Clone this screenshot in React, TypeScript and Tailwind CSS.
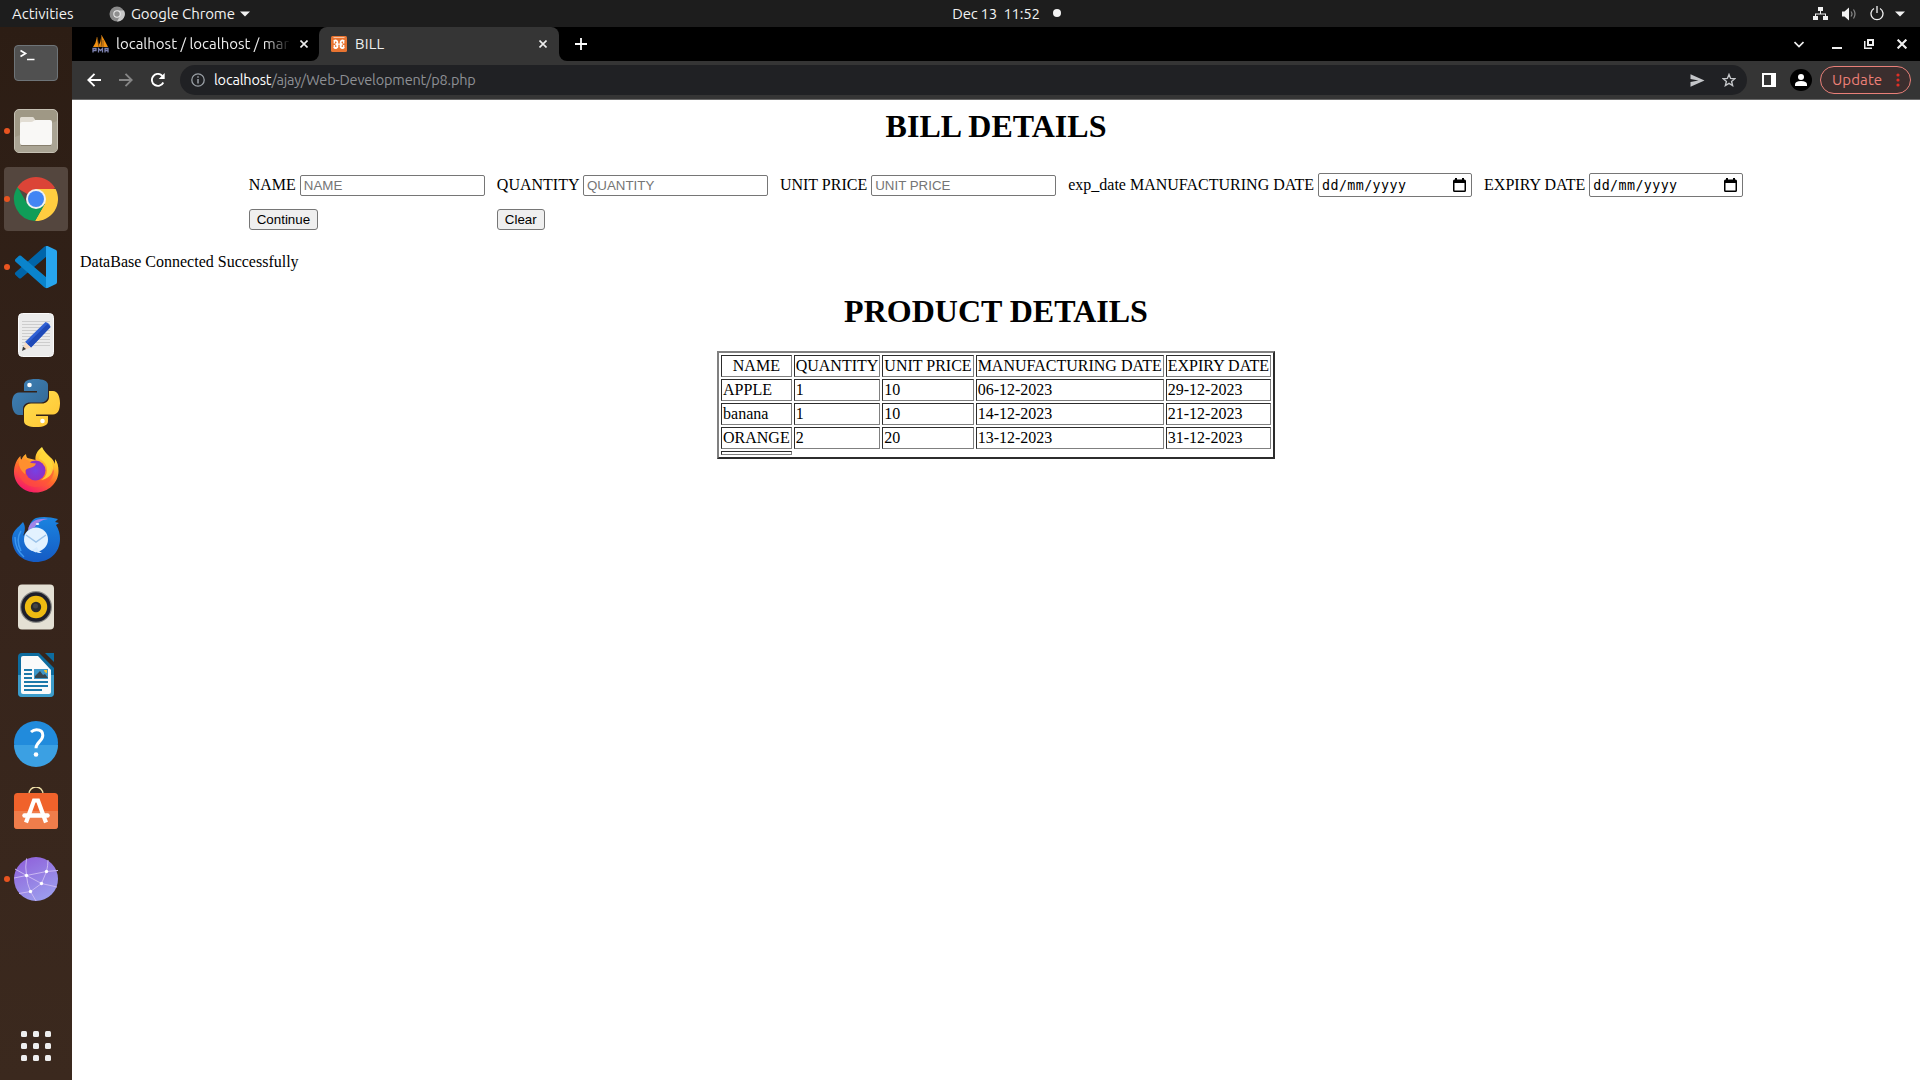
import type { ReactNode } from "react";

const UI = "font-['Ubuntu','Noto_Sans',sans-serif]";

function TerminalIcon() {
  return (
    <svg width="48" height="48" viewBox="0 0 48 48">
      <rect x="2.5" y="6.5" width="43" height="35" rx="3.5" fill="#505050" stroke="#6e7478" />
      <path d="M8.500 11.500l5 3-5 3" fill="none" stroke="#fff" strokeWidth="1.700" />
      <path d="M15 20.500h7.500" stroke="#fff" strokeWidth="1.500" />
    </svg>
  );
}

function FilesIcon() {
  return (
    <svg width="48" height="48" viewBox="0 0 48 48">
      <rect x="2.500" y="2.500" width="43" height="43" rx="4.500" fill="#9f9885" stroke="#c5c0b3" />
      <path d="M3 30L45 14v27a4 4 0 0 1-4 4H7a4 4 0 0 1-4-4z" fill="#aaa494" />
      <path d="M8 15v-3.500q0-1.500 1.500-1.500h11q1 0 1.500 1l1.500 2.500H38V20H8z" fill="#e2ddd3" />
      <path d="M8 17q0-2 2-2h9q1.500 0 2.500-1t2.500-1h14q2 0 2 2v21q0 2-2 2H10q-2 0-2-2z" fill="#f9f8f6" />
      <path d="M9 38.500h30" stroke="#877f6e" strokeWidth="1" />
    </svg>
  );
}

function ChromeIcon() {
  return (
    <svg width="48" height="48" viewBox="0 0 48 48">
      <path d="M24 24L4.950 13A22 22 0 0 1 43.050 13z" fill="#db4437" />
      <path d="M24 14H43.600A22 22 0 0 1 23 46L32.700 29z" fill="#ffcd40" />
      <path d="M15.340 29L5.600 12A22 22 0 0 0 23 46L32.700 29z" fill="#0f9d58" />
      <circle cx="24" cy="24" r="10" fill="#f1f1f1" />
      <circle cx="24" cy="24" r="8" fill="#4285f4" />
    </svg>
  );
}

function CodeIcon() {
  return (
    <svg width="48" height="48" viewBox="0 0 48 48">
      <path d="M3 31.500l4 3.700q1 .6 2 0L35 13V3q-1.500-.5-3 1L3.300 29.500q-.8 1 0 2z" fill="#0065a9" />
      <path d="M3 16.500l4-3.700q1-.6 2 0L35 35v10q-1.500.5-3-1L3.300 18.500q-.8-1 0-2z" fill="#0a84cc" />
      <path d="M34 3.300q.7-.6 1.600-.3l8.400 4q1 .6 1 2v30q0 1.400-1 2l-8.400 4q-1 .3-1.600-.3z" fill="#27a5ee" />
    </svg>
  );
}

function EditorIcon() {
  return (
    <svg width="48" height="48" viewBox="0 0 48 48">
      <rect x="6.500" y="2.500" width="35" height="43" rx="4" fill="#ebebeb" stroke="#fafafa" />
      <path d="M10 10.500h28M10 13.500h28M10 16.500h28M10 19.500h28M10 22.500h28M10 25.500h28M10 28.500h28M10 31.500h28M10 34.500h28" stroke="#c9c9c9" strokeWidth=".9" />
      <path d="M13 31L33.500 11q4 1 5 5L19 36.500z" fill="#2f60d4" />
      <path d="M15 33L35.500 13l3 3L19 36.500z" fill="#1f4ab8" />
      <path d="M13 31l6 5.500-7.500 2.500z" fill="#f7d9bf" />
      <path d="M11 35.500l3 2.500-4 2z" fill="#3a3a3a" />
    </svg>
  );
}

function PythonIcon() {
  return (
    <svg width="48" height="48" viewBox="0 0 48 48">
      <defs>
        <linearGradient id="pyBlue" x1="0" y1="0" x2="1" y2="1">
          <stop offset="0" stopColor="#3f83ba" />
          <stop offset="1" stopColor="#33658f" />
        </linearGradient>
        <linearGradient id="pyGold" x1="0" y1="0" x2="1" y2="1">
          <stop offset="0" stopColor="#ffe052" />
          <stop offset="1" stopColor="#ffc331" />
        </linearGradient>
      </defs>
      <path d="M24 0c-8 0-12 2-12 6v6h13v1.500H7c-5 0-7 5-7 11S2.500 36 7 36h4v-6c0-4 3-6.500 7-6.500h11c4 0 7-3 7-6.500V6c0-4-5-6-12-6z" fill="url(#pyBlue)" />
      <path d="M24 48c8 0 12-2 12-6v-5H24v-1.500h17c5 0 7-5 7-11.500S45.500 12 41 12h-4v6c0 4-3 6.500-7 6.500H19c-4 0-7 3-7 6.500v11c0 4 5 6 12 6z" fill="url(#pyGold)" />
      <circle cx="17.500" cy="6" r="2.300" fill="#fff" />
      <circle cx="30.500" cy="42" r="2.300" fill="#fff" />
    </svg>
  );
}

function FirefoxIcon() {
  return (
    <svg width="48" height="48" viewBox="0 1 48 48">
      <defs>
        <linearGradient id="fxBody" x1=".8" y1="0" x2=".3" y2="1">
          <stop offset="0" stopColor="#fff44f" />
          <stop offset=".3" stopColor="#ffc02d" />
          <stop offset=".6" stopColor="#ff6a2b" />
          <stop offset="1" stopColor="#f5156c" />
        </linearGradient>
        <radialGradient id="fxGlobe">
          <stop offset="0" stopColor="#7542e5" />
          <stop offset="1" stopColor="#8f2fc4" />
        </radialGradient>
      </defs>
      <path d="M30 1c-5 4-7 8-6.500 13l-8-2c-1-1-1.500-2.500-1.500-4-3 2-4 4-4.500 6-1-1-1-3-1-4C5 13 2 19 2 26c0 12 10 20.500 22 20.500S46.500 37 46.500 25c0-5-1-9-3.500-12v5c-2-5-4-6-6-8-3-3-5-5-7-9z" fill="url(#fxBody)" />
      <circle cx="23.500" cy="24.500" r="10" fill="url(#fxGlobe)" />
      <path d="M6 20c-1 12 7 21 18 21 9 0 17-6 18-16-1-2-2-3-3-4 1 10-6 15-14 15-8-1-12-6-12-12l2-5z" fill="#ff4f3d" opacity=".6" />
      <path d="M7 14c5-2 9 0 12 3l5 .5c-1 3-4 4-8 5-3 1-3 3-2.500 6C9 25 6 20 7 14z" fill="#ff8f2e" />
      <path d="M27 13c4 1 8 5 8 11 0 5-3 8-6 10 7-1 12-6 12-12 0-7-5-12-9-17-3 2-5 5-5 8z" fill="#ffd93b" opacity=".85" />
    </svg>
  );
}

function ThunderbirdIcon() {
  return (
    <svg width="48" height="48" viewBox="0 -1 48 48">
      <defs>
        <linearGradient id="tbBody" x1="0" y1="0" x2="0" y2="1">
          <stop offset="0" stopColor="#1b84e0" />
          <stop offset="1" stopColor="#155bc4" />
        </linearGradient>
      </defs>
      <path d="M24 2c7-2 14-1 22 1l-3 3 4 1-3 2c3 5 4 9 4 14 0 14-11 23-24 23C11 46 0 37 0 22c1-8 6-10 11-16 3 5 2 9 0 14l6-7c0-5 3-9 7-11z" fill="url(#tbBody)" />
      <path d="M16 14c1-7 7-12 20-11-7 1-11 4-13 8z" fill="#a184e8" />
      <path d="M9 15c-4 6-3 14 0 20M3 21c0 8 3 15 9 20" fill="none" stroke="#3b97ee" strokeWidth="1.500" />
      <circle cx="24" cy="23.500" r="12" fill="#e3f2ff" />
      <path d="M14 19l10 7 10-7" fill="none" stroke="#9cc3e9" strokeWidth="1.500" />
      <path d="M20 34c3 3 6 3 10 3-4-2-4-4-5-6z" fill="#d6ebff" />
      <ellipse cx="25.500" cy="8" rx="1.800" ry="1.100" fill="#e8f5ff" />
    </svg>
  );
}

function SpeakerIcon() {
  return (
    <svg width="48" height="48" viewBox="0 .5 48 48">
      <rect x="6" y="2" width="36" height="45" rx="4" fill="#e4e0d4" />
      <circle cx="24" cy="24.500" r="16" fill="#8b8b88" />
      <circle cx="24" cy="24.500" r="14.800" fill="#1e1f2b" />
      <circle cx="24" cy="24.500" r="11.200" fill="#eebb12" />
      <circle cx="24" cy="24.500" r="5.200" fill="#2b2b2b" />
      <circle cx="23.500" cy="23.500" r="2.500" fill="#444" />
    </svg>
  );
}

function WriterIcon() {
  return (
    <svg width="48" height="48" viewBox="0 0 48 48">
      <path d="M10 2h17l15 15v25q0 4-4 4H10q-4 0-4-4V6q0-4 4-4z" fill="#0d6c9f" />
      <path d="M6 24h36v18q0 4-4 4H10q-4 0-4-4z" fill="#3c9cca" />
      <path d="M33 2h9v9z" fill="#0d6c9f" />
      <path d="M11 5h15l13 14v22q0 2-2 2H11q-2 0-2-2V7q0-2 2-2z" fill="#fafafa" />
      <path d="M12 19h8M12 23h8M12 27h8M12 31h24M12 35h24M12 39h18" stroke="#1c78a9" strokeWidth="1.900" />
      <rect x="22" y="18" width="14" height="10" fill="#3d97c9" />
      <path d="M23 27v-2l5-5 3 4 2-1 3 4z" fill="#36474f" />
      <path d="M32 19h3v3q-2.500 0-3-3z" fill="#f5c431" />
    </svg>
  );
}

function HelpIcon() {
  return (
    <svg width="48" height="48" viewBox="0 0 48 48">
      <circle cx="24" cy="24" r="22" fill="#218bdc" />
      <path d="M2 26h44a22 22 0 0 1-44 0z" fill="#3ba0e3" />
      <path d="M19 13c2-1.800 3.500-2.300 5.500-2.300 4 0 6.300 2.200 6.300 5.500 0 6-6.800 6.800-6.800 13" fill="none" stroke="#fff" strokeWidth="3" />
      <circle cx="24" cy="35.500" r="2.300" fill="#fff" />
    </svg>
  );
}

function StoreIcon() {
  return (
    <svg width="48" height="48" viewBox="0 2 48 48">
      <path d="M17 11V9a7 7 0 0 1 14 0V11" fill="none" stroke="#efe0a8" strokeWidth="1.500" />
      <rect x="2" y="8" width="44" height="36" rx="3.500" fill="#f0622b" />
      <path d="M2 26h44v14.500q0 3.500-3.500 3.500h-37Q2 44 2 40.500z" fill="#ef7d4b" />
      <path d="M14 37.500l8-22h4l8 22" fill="none" stroke="#fff" strokeWidth="4.200" />
      <path d="M12.500 30.500h23" stroke="#fff" strokeWidth="4.500" strokeLinecap="round" />
    </svg>
  );
}

function WebIcon() {
  return (
    <svg width="48" height="48" viewBox="0 0 48 48">
      <defs>
        <linearGradient id="web" x1="0" y1="0" x2=".5" y2="1">
          <stop offset="0" stopColor="#8e5cd9" />
          <stop offset="1" stopColor="#9b9aec" />
        </linearGradient>
      </defs>
      <circle cx="24" cy="24" r="22" fill="url(#web)" />
      <path d="M14.500 3.500Q13 12 14.500 20.500Q15 29 18.500 36.500L24 46M3 14l11.500 6.500L29.500 28.500 45 32M14.500 20.500L34.500 16.500 46 15.500M36 5Q36 11 34.500 16.500L29.500 28.500 18.500 36.500 7 38.500M2 23l12.500-2.500" fill="none" stroke="#c9b7f2" strokeWidth="1" />
      <g fill="#fff">
        <circle cx="14.500" cy="20.500" r="1.700" />
        <circle cx="34.500" cy="16.500" r="1.700" />
        <circle cx="29.500" cy="28.500" r="1.700" />
        <circle cx="18.500" cy="36.500" r="1.700" />
      </g>
    </svg>
  );
}

function DockItem({ icon, running, active }: { icon: ReactNode; running?: boolean; active?: boolean }) {
  return (
    <div className={`relative flex h-16 w-16 items-center justify-center rounded ${active ? "bg-[#54463e]" : ""}`}>
      {running && <span className="absolute left-0 top-[29px] size-1.5 rounded-full bg-[#e95420]" />}
      {icon}
    </div>
  );
}

function Dock() {
  return (
    <nav className="flex w-[72px] shrink-0 flex-col items-center justify-between bg-linear-to-b from-[#2c1d14] via-[#36241b] to-[#3b291e] pt-1 pb-[19px]">
      <div className="flex flex-col gap-1">
        <DockItem icon={<TerminalIcon />} />
        <DockItem icon={<FilesIcon />} running />
        <DockItem icon={<ChromeIcon />} running active />
        <DockItem icon={<CodeIcon />} running />
        <DockItem icon={<EditorIcon />} />
        <DockItem icon={<PythonIcon />} />
        <DockItem icon={<FirefoxIcon />} />
        <DockItem icon={<ThunderbirdIcon />} />
        <DockItem icon={<SpeakerIcon />} />
        <DockItem icon={<WriterIcon />} />
        <DockItem icon={<HelpIcon />} />
        <DockItem icon={<StoreIcon />} />
        <DockItem icon={<WebIcon />} running />
      </div>
      <div className="grid grid-cols-3 gap-1.5">
        {Array.from({ length: 9 }, (_, i) => (
          <span key={i} className="size-1.5 rounded-[1.5px] bg-[#eee]" />
        ))}
      </div>
    </nav>
  );
}

function TopBar() {
  return (
    <header className={`grid h-[27px] shrink-0 grid-cols-3 items-center bg-[#1d1d1d] text-[15px] leading-none text-[#f2f2f2] ${UI}`}>
      <div className="flex items-center pl-3">
        <span className="w-[97px]">Activities</span>
        <svg width="16" height="16" viewBox="0 0 16 16">
          <circle cx="8" cy="8" r="7.500" fill="#8b8b8b" />
          <path d="M8 4.500h7A7.500 7.500 0 0 1 8 15.500l3-5.500z" fill="#c9c9c9" />
          <circle cx="8" cy="8" r="3.700" fill="#eee" />
          <circle cx="8" cy="8" r="2.700" fill="#8f8f8f" />
        </svg>
        <span className="ml-1.5 w-[104px] whitespace-nowrap tracking-[-0.1px]">Google Chrome</span>
        <svg className="ml-[5px]" width="10" height="6" viewBox="0 0 10 6">
          <path d="M0 .5h10L5 5.500z" fill="#f2f2f2" />
        </svg>
      </div>
      <div className="flex items-center justify-center gap-[13px] pb-px pl-[93px]">
        <span className="whitespace-pre tracking-[-0.25px]">Dec 13  11:52</span>
        <span className="size-2 rounded-full bg-[#f2f2f2]" />
      </div>
      <div className="flex items-center justify-end pr-[15px]">
        <svg width="15" height="14" viewBox="0 0 15 14" fill="#f2f2f2">
          <path d="M5 0h5v4H5zM0 9h5v4H0zM10 9h5v4h-5zM7 4h1v3H7zM2 6.500h11V9h-1V7.500H3V9H2z" />
        </svg>
        <svg className="ml-[13px]" width="16" height="14" viewBox="0 0 16 14">
          <path d="M1 4.500h2.500L8 .5v13l-4.500-4H1z" fill="#f2f2f2" />
          <path d="M10 4.500q2 2.500 0 5M12.500 2.500q3 4.500 0 9" fill="none" stroke="#888" strokeWidth="1.200" />
        </svg>
        <svg className="ml-[13px]" width="14" height="15" viewBox="0 0 14 15" fill="none" stroke="#f2f2f2" strokeWidth="1.300">
          <path d="M4 2.500a6 6 0 1 0 6 0M7 0v7" />
        </svg>
        <svg className="ml-[11px]" width="10" height="6" viewBox="0 0 10 6">
          <path d="M0 .5h10L5 5.500z" fill="#f2f2f2" />
        </svg>
      </div>
    </header>
  );
}

function Cross({ size = 8, weight = 1.6 }: { size?: number; weight?: number }) {
  return (
    <svg width={size} height={size} viewBox="0 0 8 8" fill="none" stroke="#eee" strokeWidth={weight}>
      <path d="M.5.5l7 7M7.500.5l-7 7" />
    </svg>
  );
}

function TabStrip() {
  return (
    <div className="bg-[#353535]">
      <div className={`flex h-[34px] text-[15px] leading-none text-[#eee] ${UI}`}>
        <div className="flex w-[247px] items-center rounded-br-lg bg-black pl-5">
          <svg width="17" height="18" viewBox="0 0 17 18">
            <path d="M1 12Q4 8 5 2l2 10zM6 12Q9 7 9.500 0q3 5 6.500 12z" fill="#f29111" />
            <path d="M5 2l2 10M9.500 0q.5 7-.5 12M11 5v7" stroke="#7a4a12" strokeWidth=".8" />
            <path d="M1 17.500v-4h3v2H1M6.500 17.500v-4l2 2 2-2v4M13 17.500v-4h3v4M13 15.500h3" fill="none" stroke="#7d82b0" strokeWidth="1.300" />
          </svg>
          <span className="ml-[7px] w-[175px] overflow-hidden pt-1 pb-1.5 whitespace-nowrap mask-r-from-85% mask-r-to-100%">localhost / localhost / mar</span>
          <span className="ml-[9px]"><Cross /></span>
        </div>
        <div className="w-[240px] bg-black">
          <div className="flex h-full items-center rounded-t-lg bg-[#353535] pl-3">
            <svg width="16" height="16" viewBox="0 0 16 16">
              <rect width="16" height="16" rx="1.500" fill="#e87431" />
              <path d="M2.500 1.500h11" stroke="#f7c4a4" />
              <g fill="none" stroke="#fff" strokeWidth="1.900">
                <path d="M3 5.200Q4 4.200 5.300 4.600T6.300 7Q5.800 8.200 4.500 8.200Q6.300 8.300 6.500 9.800T5 12Q3.800 12.200 3 11.200" />
                <path d="M13 5.200Q12 4.200 10.700 4.600T9.700 7Q10.200 8.200 11.500 8.200Q9.700 8.300 9.500 9.800T11 12Q12.200 12.200 13 11.200" />
                <path d="M3.300 4.500v3M12.700 4.500v3M3.300 9v3M12.700 9v3M6 8.200h4" strokeWidth="1.300" />
              </g>
            </svg>
            <span className="ml-2 w-[184px] pb-0.5 tracking-[0.2px]">BILL</span>
            <Cross />
          </div>
        </div>
        <div className="flex flex-1 items-center rounded-bl-lg bg-black pl-4">
          <svg width="12" height="12" viewBox="0 0 12 12" stroke="#fff" strokeWidth="1.800">
            <path d="M6 0v12M0 6h12" />
          </svg>
          <div className="ml-auto flex items-center pr-[13px]">
            <svg width="10" height="7" viewBox="0 0 10 7" fill="none" stroke="#eee" strokeWidth="1.700">
              <path d="M.5 1l4.500 4.500L9.500 1" />
            </svg>
            <span className="mt-2 ml-[28px] h-0.5 w-2.5 bg-[#eee]" />
            <svg className="ml-[22px]" width="10" height="10" viewBox="0 0 10 10" fill="none" stroke="#eee">
              <path d="M4 1h5v5H4z" strokeWidth="2" />
              <path d="M.75 2v7.250H8" strokeWidth="1.500" />
            </svg>
            <span className="ml-[23px]"><Cross size={10} weight={1.700} /></span>
          </div>
        </div>
      </div>
    </div>
  );
}

function Toolbar() {
  return (
    <div className={`flex h-[39px] items-center border-b border-[#6a6a6a] bg-[#353535] pr-[9px] pl-[15px] leading-none ${UI}`}>
      <svg width="14" height="14" viewBox="0 0 14 14" fill="none" stroke="#fff" strokeWidth="1.900">
        <path d="M14 7H1.500M7.500.8L1.300 7l6.200 6.200" />
      </svg>
      <svg className="ml-[18px]" width="14" height="14" viewBox="0 0 14 14" fill="none" stroke="#868686" strokeWidth="1.900">
        <path d="M0 7h12.500M6.500.8L12.700 7l-6.200 6.200" />
      </svg>
      <svg className="ml-[18px]" width="14" height="14" viewBox="0 0 14 14">
        <path d="M12.300 9.500A6 6 0 1 1 11.300 2.800L12 3.500" fill="none" stroke="#fff" strokeWidth="1.900" />
        <path d="M13.700 0v6H7.700z" fill="#fff" />
      </svg>
      <div className="ml-[15px] flex h-[30px] flex-1 items-center rounded-full bg-[#202124] pr-[11px] pl-[11px]">
        <svg width="14" height="14" viewBox="0 0 14 14" fill="none" stroke="#9aa0a6" strokeWidth="1.300">
          <circle cx="7" cy="7" r="6.200" />
          <path d="M7 6v4.500M7 3.200v1.500" strokeWidth="1.500" />
        </svg>
        <span className="ml-[9px] text-[14.500px] tracking-[-0.18px] text-[#8e9094]">
          <span className="text-white">localhost</span>/ajay/Web-Development/p8.php
        </span>
        <svg className="ml-auto" width="15" height="13" viewBox="0 0 15 13">
          <path d="M.5.300L14.500 6.500.5 12.700V8l8-1.500-8-1.500z" fill="#c4c6c9" />
        </svg>
        <svg className="ml-[17px]" width="14" height="14" viewBox="0 0 14 14" fill="none" stroke="#c4c6c9" strokeWidth="1.400">
          <path d="M7 1.500l1.600 3.900 4.200.3-3.200 2.700 1 4.100L7 10.300l-3.600 2.200 1-4.100L1.200 5.700l4.200-.3z" />
        </svg>
      </div>
      <svg className="ml-[15px]" width="14" height="14" viewBox="0 0 14 14">
        <path d="M0 0h14v14H0zM2 2v10h7V2z" fill="#fff" fillRule="evenodd" />
      </svg>
      <svg className="ml-[14px]" width="22" height="22" viewBox="0 0 22 22">
        <circle cx="11" cy="11" r="11" fill="#000" />
        <circle cx="11" cy="8" r="3" fill="#fff" />
        <path d="M5 17v-1.500q0-3.500 6-3.500t6 3.500V17z" fill="#fff" />
      </svg>
      <div className="ml-2 flex h-7 w-[91px] items-center rounded-full border border-[#e98079] bg-[#3b2e2e] pl-[11px] text-[15px] text-[#ee8078]">
        <span className="w-[51px] pb-0.5 tracking-[0.1px]">Update</span>
        <svg className="ml-[13px]" width="4" height="14" viewBox="0 0 4 14" fill="#e02f26">
          <circle cx="2" cy="2" r="1.600" />
          <circle cx="2" cy="7" r="1.600" />
          <circle cx="2" cy="12" r="1.600" />
        </svg>
      </div>
    </div>
  );
}

function TextField({ label }: { label: string }) {
  return (
    <td className="p-[5px]">
      {label}{" "}
      <input
        placeholder={label}
        className="h-[21px] w-[185px] rounded-xs border border-[#767676] bg-white px-[3px] py-0 align-baseline font-['Liberation_Sans',sans-serif] text-[13.333px] leading-[15px] placeholder:text-[#757575]"
      />
    </td>
  );
}

function DateField({ label }: { label: string }) {
  return (
    <td className="p-[5px]">
      {label}{" "}
      <span className="inline-flex h-6 w-[154px] items-center justify-between rounded-xs border border-[#767676] pt-0.5 pr-[5.500px] pl-[3px] align-baseline font-['DejaVu_Sans_Mono',monospace] text-[13.333px] leading-[18px] tracking-[0.400px]">
        dd/mm/yyyy
        <svg className="mb-0.5" width="13" height="14" viewBox="0 0 13 14">
          <path d="M2 0h2v1.500h5V0h2v1.500h.5q1.500 0 1.500 1.500v9.500q0 1.500-1.500 1.500h-10Q0 14 0 12.500V3q0-1.500 1.500-1.500H2zM1.500 5v7.500h10V5z" fill="#000" fillRule="evenodd" />
        </svg>
      </span>
    </td>
  );
}

function FormButton({ children }: { children: ReactNode }) {
  return (
    <td className="p-[5px]">
      <button className="block h-[21px] rounded-[3px] border border-[#767676] bg-[#efefef] px-[7px] font-['Liberation_Sans',sans-serif] text-[13.333px] leading-[15px]">
        {children}
      </button>
    </td>
  );
}

const columns = ["NAME", "QUANTITY", "UNIT PRICE", "MANUFACTURING DATE", "EXPIRY DATE"];
const rows = [
  ["APPLE", "1", "10", "06-12-2023", "29-12-2023"],
  ["banana", "1", "10", "14-12-2023", "21-12-2023"],
  ["ORANGE", "2", "20", "13-12-2023", "31-12-2023"],
];
const cell = "border border-t-[#2c2c2c] border-r-[#808080] border-b-[#808080] border-l-[#2c2c2c] p-px";

function BillPage() {
  return (
    <main className="flex-1 bg-white p-2 font-['Liberation_Serif',serif] text-base leading-[18px] text-black">
      <h1 className="text-center text-[32px] leading-[37px] font-bold">BILL DETAILS</h1>
      <table className="mx-auto mt-[21px] border-separate border-spacing-0.5 whitespace-nowrap">
        <tbody>
          <tr>
            <TextField label="NAME" />
            <TextField label="QUANTITY" />
            <TextField label="UNIT PRICE" />
            <DateField label="exp_date MANUFACTURING DATE" />
            <DateField label="EXPIRY DATE" />
          </tr>
          <tr>
            <FormButton>Continue</FormButton>
            <FormButton>Clear</FormButton>
          </tr>
        </tbody>
      </table>
      <p className="mt-4">DataBase Connected Successfully</p>
      <h1 className="mt-[22px] text-center text-[32px] leading-[37px] font-bold">PRODUCT DETAILS</h1>
      <table className="mx-auto mt-[21px] border-separate border-spacing-0.5 border-2 border-t-[#808080] border-r-[#2c2c2c] border-b-[#2c2c2c] border-l-[#808080] whitespace-nowrap">
        <tbody>
          <tr>
            {columns.map((c) => (
              <th key={c} className={`${cell} font-normal`}>{c}</th>
            ))}
          </tr>
          {rows.map((r) => (
            <tr key={r[0]}>
              {r.map((v, i) => (
                <td key={i} className={cell}>{v}</td>
              ))}
            </tr>
          ))}
          <tr>
            <td className={cell} />
          </tr>
        </tbody>
      </table>
    </main>
  );
}

export default function App() {
  return (
    <div className="flex h-screen flex-col overflow-hidden bg-white">
      <TopBar />
      <div className="flex min-h-0 flex-1">
        <Dock />
        <div className="flex min-w-0 flex-1 flex-col">
          <TabStrip />
          <Toolbar />
          <BillPage />
        </div>
      </div>
    </div>
  );
}
